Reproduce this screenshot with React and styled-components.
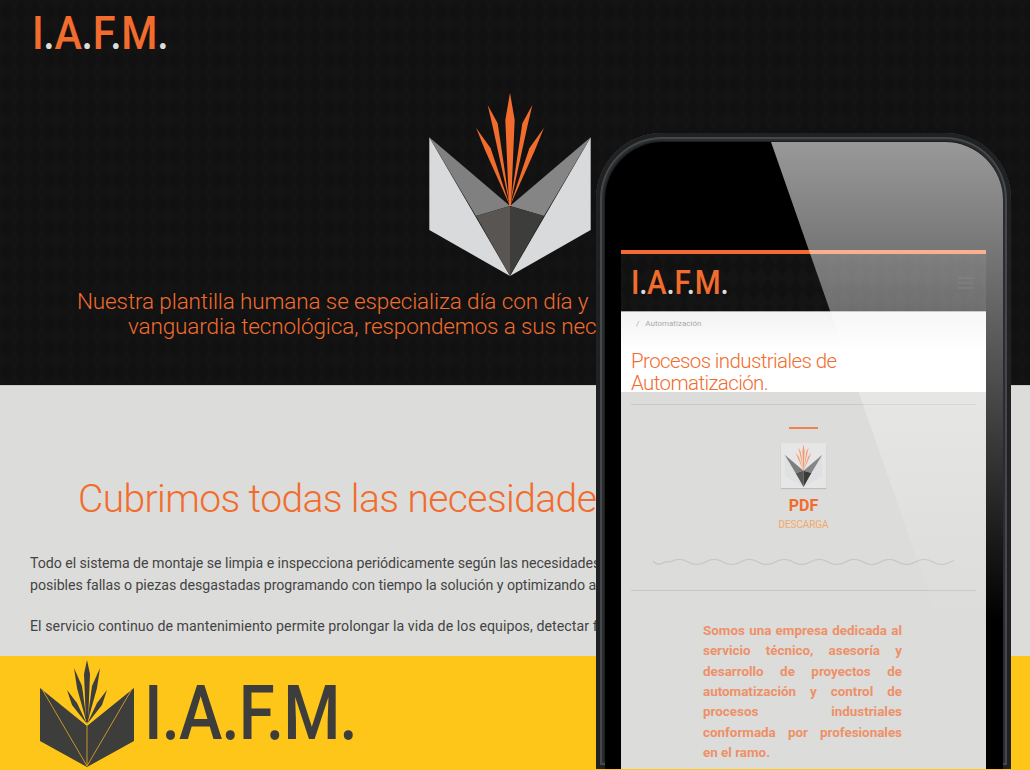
import React from 'react'
import styled, { createGlobalStyle } from 'styled-components'

const GlobalStyle = createGlobalStyle`
	html, body {
		margin: 0;
		padding: 0;
		height: 770px;
		overflow: hidden;
		background: #dcdcda;
		font-family: "Roboto", "Liberation Sans", sans-serif;
	}
`

const Page = styled.div`
	position: relative;
	width: 1030px;
	height: 770px;
	overflow: hidden;
	display: flex;
	flex-direction: column;
`
const Hero = styled.div`
	height: 385px;
	box-sizing: border-box;
	background-color: #111112;
	background-image:
		linear-gradient(60deg, #131314 25%, transparent 25%, transparent 75%, #131314 75%),
		linear-gradient(-60deg, #131314 25%, transparent 25%, transparent 75%, #131314 75%);
	background-size: 14px 24px;
	overflow: hidden;
`
const TopLogo = styled.div`
	padding: 5px 0 0 32px;
	height: 72px;
	box-sizing: border-box;
`
const LogoText = styled.div`
	display: inline-block;
	font-family: "Roboto", sans-serif;
	font-weight: 500;
	font-size: ${props => props.size}px;
	line-height: 1.2;
	letter-spacing: ${props => props.spacing}px;
	color: ${props => props.color};
	white-space: nowrap;
	transform: scaleX(${props => props.squeeze});
	transform-origin: left center;
`
const Dot = styled.span`
	color: ${props => props.color};
`
const HeroMark = styled.div`
	display: flex;
	padding-left: 410px;
	height: 210px;
	margin-top: 8px;
`
const HeroLine = styled.div`
	padding-left: ${props => props.indent}px;
	font-size: 22.5px;
	font-weight: 300;
	line-height: 25px;
	letter-spacing: -0.12px;
	color: #f26c2d;
	white-space: nowrap;
`
const Lead = styled.div`
	margin-top: -1px;
`
const Content = styled.div`
	height: 271px;
	box-sizing: border-box;
	background: #dcdcda;
	border-top: 1px solid #c9c9c7;
	padding: 88px 0 0 30px;
	overflow: hidden;
`
const Heading = styled.h2`
	margin: 0 0 28px 48px;
	font-size: 39px;
	font-weight: 300;
	line-height: 50px;
	letter-spacing: -0.6px;
	color: #f26c2d;
	white-space: nowrap;
`
const Paragraph = styled.p`
	margin: 0 0 19px;
	font-size: 14.2px;
	font-weight: 400;
	line-height: 22px;
	letter-spacing: ${props => props.spacing}px;
	color: #444444;
	white-space: nowrap;
`
const Footer = styled.div`
	flex: 1;
	background: #ffc61a;
	display: flex;
	align-items: flex-start;
	gap: 10px;
	padding: 4px 0 0 40px;
`
const FooterName = styled.div`
	margin-top: 8px;
`
const Phone = styled.div`
	position: absolute;
	left: 596px;
	top: 133px;
	width: 415px;
	height: 636px;
	box-sizing: border-box;
	padding: 9px 8px 0 9px;
	background: #1c1e1f;
	border-radius: 66px 66px 0 0;
	box-shadow: inset 0 0 0 4px #1f2122, inset 0 0 0 6px #45484a, inset 0 0 0 8px #2a2c2d;
`
const Screen = styled.div`
	position: relative;
	height: 100%;
	box-sizing: border-box;
	padding: 108px 17px 0 16px;
	background: #000;
	border-radius: 58px 58px 0 0;
	overflow: hidden;
`
const Glare = styled.div`
	position: absolute;
	inset: 0;
	background: linear-gradient(to bottom, rgba(255, 255, 255, 0.6), rgba(255, 255, 255, 0) 480px);
	clip-path: polygon(166px 0, 100% 0, 100% 500px, 341px 500px);
	pointer-events: none;
`
const Site = styled.div`
	height: 100%;
	display: flex;
	flex-direction: column;
	background: #dcdcda;
`
const SiteHeader = styled.div`
	height: 62px;
	box-sizing: border-box;
	border-top: 4px solid #f26c2d;
	border-bottom: 1px solid #a8a8a8;
	background-color: #111112;
	background-image:
		linear-gradient(60deg, #141415 25%, transparent 25%, transparent 75%, #141415 75%),
		linear-gradient(-60deg, #141415 25%, transparent 25%, transparent 75%, #141415 75%);
	background-size: 14px 24px;
	display: flex;
	align-items: center;
	justify-content: space-between;
	padding: 0 12px 0 10px;
`
const Burger = styled.div`
	width: 16px;
	display: flex;
	flex-direction: column;
	gap: 3px;
	& span {
		height: 2px;
		background: #1e1e1e;
	}
`
const TitleBlock = styled.div`
	height: 80px;
	box-sizing: border-box;
	background: linear-gradient(to bottom, #f2f2f2, #ffffff 40px);
`
const Crumb = styled.div`
	padding: 6px 0 0 15px;
	font-size: 8px;
	line-height: 12px;
	color: #aaaaaa;
	& span {
		margin-right: 6px;
	}
`
const PageTitle = styled.h1`
	max-width: 230px;
	margin: 20px 0 0 10px;
	font-size: 20.5px;
	font-weight: 300;
	line-height: 22px;
	letter-spacing: -0.6px;
	color: #f26c2d;
`
const Rule = styled.div`
	height: 1px;
	margin: ${props => props.top || 0}px 10px 0;
	background: #c8c8c6;
`
const Download = styled.div`
	display: flex;
	flex-direction: column;
	align-items: center;
	padding-top: 22px;
`
const Dash = styled.div`
	width: 29px;
	height: 2px;
	background: #f0824e;
`
const Thumb = styled.div`
	width: 45px;
	height: 45px;
	margin-top: 14px;
	background: #e6e6e6;
	box-shadow: 0 1px 1px #bcbcbc;
`
const PdfLabel = styled.div`
	margin-top: 7px;
	font-size: 16px;
	font-weight: 700;
	line-height: 22px;
	color: #f26c2d;
`
const DownloadLabel = styled.div`
	font-size: 10px;
	line-height: 16px;
	letter-spacing: -0.1px;
	color: #f3a868;
`
const Wave = styled.svg`
	display: block;
	width: 301px;
	height: 8px;
	margin: 26px auto 23px;
`
const Intro = styled.p`
	width: 199px;
	margin: 30px 0 0 82px;
	font-size: 13.4px;
	font-weight: 700;
	line-height: 20.35px;
	text-align: justify;
	color: #ee9068;
`

// mark drawn in the coordinates of a 600x630 box
const blades = [
	'300,38 314,120 303,378 297,378 286,120',
	'233,75 263,130 300,378 247,135',
	'367,75 337,130 300,378 353,135',
	'198,143 242,205 300,378 226,212',
	'402,143 358,205 300,378 374,212',
]

function Mark({ width, height, viewBox = '0 0 600 630', flame, light, grey, greyRight, dark, darkRight }) {
	return (
		<svg width={width} height={height} viewBox={viewBox}>
			<polygon points="58,172 300,588 58,450" fill={light} />
			<polygon points="542,172 300,588 542,450" fill={light} />
			<polygon points="58,172 300,378 198,408" fill={grey} />
			<polygon points="542,172 300,378 402,408" fill={greyRight} />
			<polygon points="198,408 300,378 300,588" fill={dark} />
			<polygon points="402,408 300,378 300,588" fill={darkRight} />
			{blades.map(p => <polygon key={p} points={p} fill={flame} />)}
		</svg>
	)
}

function BookMark() {
	return (
		<svg width={94} height={108} viewBox="0 0 94 108">
			<polygon points="0,28 47,66 47,107 0,81" fill="#3d3d3b" />
			<polygon points="94,28 47,66 47,107 94,81" fill="#3d3d3b" />
			<path d="M2 29 L47 106 M92 29 L47 106 M47 66 L47 106" stroke="#c8962a" strokeWidth="1" fill="none" />
			<polygon points="47,0 50,14 48,62 46,62 44,14" fill="#3d3d3b" />
			<polygon points="34,8 42,26 47,64 37,28" fill="#3d3d3b" />
			<polygon points="60,8 52,26 47,64 57,28" fill="#3d3d3b" />
			<polygon points="27,30 37,43 47,64 32,45" fill="#3d3d3b" />
			<polygon points="67,30 57,43 47,64 62,45" fill="#3d3d3b" />
		</svg>
	)
}

function Logo({ size, spacing, squeeze, color, dot }) {
	return (
		<LogoText size={size} spacing={spacing} squeeze={squeeze} color={color}>
			I<Dot color={dot}>.</Dot>A<Dot color={dot}>.</Dot>F<Dot color={dot}>.</Dot>M<Dot color={dot}>.</Dot>
		</LogoText>
	)
}

function WaveLine() {
	let d = 'M0 2 q4.4 5 8.75 2.5 T17.5 3'
	for (let i = 0; i < 9; i++) d += ' q8.75 -5 17.5 0 t17.5 0'
	d += ' q8.75 -5 17.5 0 t6 0'
	return (
		<Wave viewBox="0 0 301 8">
			<path d={d} stroke="#c6c6c4" strokeWidth="1.2" fill="none" />
		</Wave>
	)
}

export default function App() {
	return (
		<Page>
			<GlobalStyle />
			<Hero>
				<TopLogo>
					<Logo size={47} spacing={-0.4} squeeze={0.88} color="#f26c2d" dot="#dcdcda" />
				</TopLogo>
				<HeroMark>
					<Mark width={200} height={210} flame="#f26c2d" light="#d9dadc" grey="#808080" greyRight="#858585" dark="#595553" darkRight="#3d3d3c" />
				</HeroMark>
				<Lead>
					<HeroLine indent={77}>Nuestra plantilla humana se especializa día con día y</HeroLine>
					<HeroLine indent={128}>vanguardia tecnológica, respondemos a sus nec</HeroLine>
				</Lead>
			</Hero>
			<Content>
				<Heading>Cubrimos todas las necesidade</Heading>
				<Paragraph spacing={-0.05}>
					Todo el sistema de montaje se limpia e inspecciona periódicamente según las necesidades
					<br />
					posibles fallas o piezas desgastadas programando con tiempo la solución y optimizando a
				</Paragraph>
				<Paragraph spacing={0.05}>El servicio continuo de mantenimiento permite prolongar la vida de los equipos, detectar f</Paragraph>
			</Content>
			<Footer>
				<BookMark />
				<FooterName>
					<Logo size={76} spacing={-1} squeeze={0.86} color="#3d3d3b" dot="#3d3d3b" />
				</FooterName>
			</Footer>
			<Phone>
				<Screen>
					<Site>
						<SiteHeader>
							<Logo size={34} spacing={-0.3} squeeze={0.87} color="#f26c2d" dot="#dcdcda" />
							<Burger><span /><span /><span /></Burger>
						</SiteHeader>
						<TitleBlock>
							<Crumb><span>/</span>Automatización</Crumb>
							<PageTitle>Procesos industriales de Automatización.</PageTitle>
						</TitleBlock>
						<Rule top={12} />
						<Download>
							<Dash />
							<Thumb>
								<Mark width={45} height={45} viewBox="30 20 540 580" flame="#f79a6b" light="#dfe0e2" grey="#7d7d7d" greyRight="#868686" dark="#595553" darkRight="#3a3a39" />
							</Thumb>
							<PdfLabel>PDF</PdfLabel>
							<DownloadLabel>DESCARGA</DownloadLabel>
						</Download>
						<WaveLine />
						<Rule />
						<Intro>Somos una empresa dedicada al servicio técnico, asesoría y desarrollo de proyectos de automatización y control de procesos industriales conformada por profesionales en el ramo.</Intro>
					</Site>
					<Glare />
				</Screen>
			</Phone>
		</Page>
	)
}
